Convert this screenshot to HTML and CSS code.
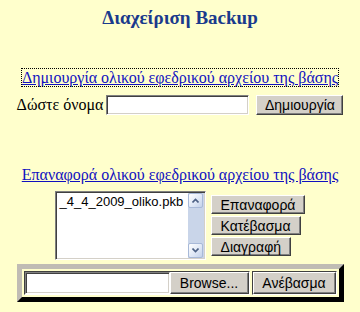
FILE: index.html
```html
<!DOCTYPE html>
<html lang="el">
<head>
<meta charset="utf-8">
<title>Διαχείριση Backup</title>
<link rel="stylesheet" href="styles.css">
</head>
<body>
<main class="page">
  <h1 class="title">Διαχείριση Backup</h1>

  <section class="create">
    <p class="link-line"><a href="#" class="link focused">Δημιουργία ολικού εφεδρικού αρχείου της βάσης</a></p>
    <div class="create-row">
      <span class="label">Δώστε όνομα</span>
      <span class="textbox"></span>
      <button class="btn btn-create" type="button">Δημιουργία</button>
    </div>
  </section>

  <section class="restore">
    <p class="link-line"><a href="#" class="link">Επαναφορά ολικού εφεδρικού αρχείου της βάσης</a></p>
    <div class="restore-row">
      <div class="listbox">
        <div class="list-items">
          <div class="item">_4_4_2009_oliko.pkb</div>
        </div>
        <div class="scrollbar">
          <span class="sb-btn"><svg width="7" height="5" viewBox="0 0 7 5"><path d="M0.5 4.5 L3.5 1.5 L6.5 4.5" fill="none" stroke="#4d6185" stroke-width="1.6"/></svg></span>
          <span class="sb-btn"><svg width="7" height="5" viewBox="0 0 7 5"><path d="M0.5 0.5 L3.5 3.5 L6.5 0.5" fill="none" stroke="#4d6185" stroke-width="1.6"/></svg></span>
        </div>
      </div>
      <div class="actions">
        <button class="btn btn-action" type="button">Επαναφορά</button>
        <button class="btn btn-action" type="button">Κατέβασμα</button>
        <button class="btn btn-action" type="button">Διαγραφή</button>
      </div>
    </div>

    <div class="upload">
      <div class="cell">
        <span class="filebox"></span>
        <button class="btn btn-browse" type="button">Browse...</button>
      </div>
      <div class="cell">
        <button class="btn btn-upload" type="button">Ανέβασμα</button>
      </div>
    </div>
  </section>
</main>
</body>
</html>
```

FILE: styles.css
```css
html, body {
  margin: 0;
  padding: 0;
  background: #ffffcc;
}

.page {
  width: 360px;
  padding-top: 8px;
  font-family: "Liberation Serif", "Times New Roman", serif;
}

.title {
  margin: 0;
  text-align: center;
  font: bold 19px/20px "Liberation Serif", "Times New Roman", serif;
  color: #1a3a8c;
}

.create {
  margin-top: 41px;
}

.link-line {
  margin: 0;
  text-align: center;
  font-size: 16px;
  line-height: 18px;
}

.link {
  color: #1010c0;
  text-decoration: underline;
}

.focused {
  outline: 1px dotted #000;
}

.create-row {
  margin-top: 8px;
  height: 20px;
  display: flex;
  justify-content: center;
  align-items: center;
}

.label {
  font-size: 16px;
  color: #000;
  margin-right: 3px;
}

.textbox,
.filebox {
  display: block;
  box-sizing: border-box;
  background: #fff;
  border: 1px solid;
  border-color: #808080 #ffffff #ffffff #808080;
  box-shadow: inset 1px 1px 0 #404040, inset -1px -1px 0 #d4d0c8;
}

.textbox {
  width: 143px;
  height: 20px;
  margin-right: 7px;
}

.btn {
  box-sizing: border-box;
  margin: 0;
  padding: 0 9px;
  font: 14px/1 "Liberation Sans", Arial, sans-serif;
  color: #000;
  background: #d4d0c8;
  border: 1px solid;
  border-color: #ffffff #404040 #404040 #ffffff;
  box-shadow: inset -1px -1px 0 #808080;
  border-radius: 0;
  cursor: default;
}

.btn-create {
  width: 87px;
  height: 20px;
  padding: 0;
}

.restore {
  margin-top: 51px;
}

.restore-row {
  margin-top: 7px;
  display: flex;
  justify-content: center;
  align-items: center;
  gap: 5px;
}

.listbox {
  box-sizing: border-box;
  width: 151px;
  height: 69px;
  display: flex;
  background: #fff;
  border: 1px solid;
  border-color: #808080 #ffffff #ffffff #808080;
  box-shadow: inset 1px 1px 0 #404040, inset -1px -1px 0 #d4d0c8;
  padding: 1px;
}

.list-items {
  flex: 1;
  padding: 1px 0 0 3px;
  font: 13px/15px "Liberation Sans", Arial, sans-serif;
  color: #000;
}

.scrollbar {
  width: 16px;
  background: #c9d5e9;
  display: flex;
  flex-direction: column;
  justify-content: space-between;
  align-items: center;
}

.sb-btn {
  box-sizing: border-box;
  width: 15px;
  height: 15px;
  display: flex;
  align-items: center;
  justify-content: center;
  background: linear-gradient(135deg, #ffffff 0%, #dde6f5 60%, #c4d2ea 100%);
  border: 1px solid #a8b9d8;
  border-radius: 2px;
}

.actions {
  display: flex;
  flex-direction: column;
  align-items: flex-start;
  gap: 2px;
}

.btn-action {
  height: 19px;
}

.upload {
  margin: 4px auto 0;
  width: fit-content;
  display: flex;
  gap: 2px;
  padding: 2px;
  background: #ffffcc;
  border: 5px solid;
  border-color: #c0bcb4 #000000 #000000 #c0bcb4;
}

.cell {
  display: flex;
  border: 1px solid;
  border-color: #404040 #ffffff #ffffff #404040;
}

.filebox {
  width: 145px;
  height: 22px;
}

.btn-browse {
  width: 79px;
  height: 22px;
  padding: 0;
}

.btn-upload {
  width: 83px;
  height: 22px;
  padding: 0;
}
```
